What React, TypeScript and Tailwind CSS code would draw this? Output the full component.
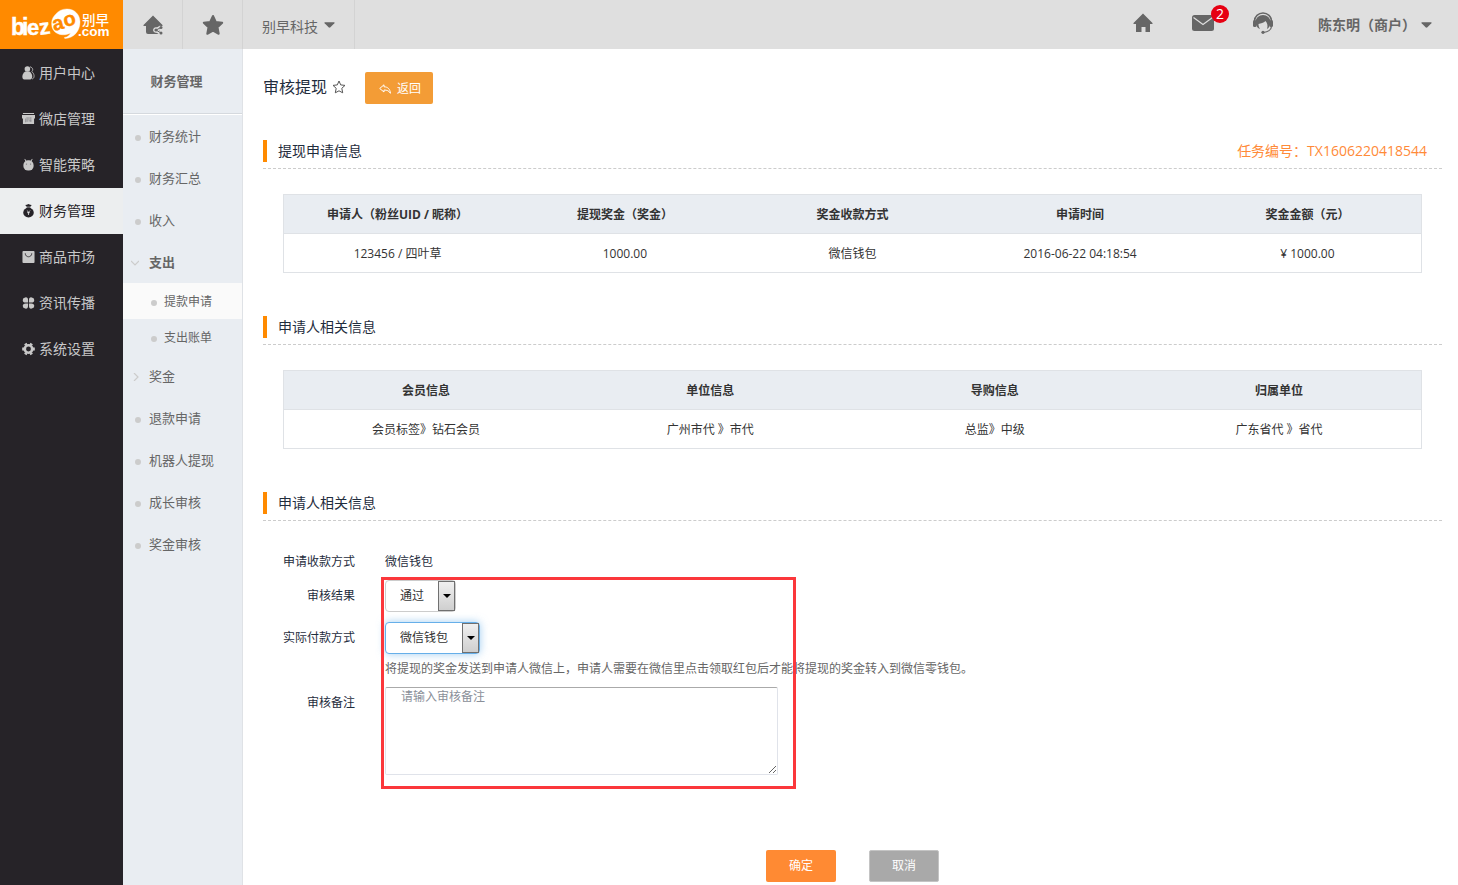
import { useState } from "react";
import type { ReactNode } from "react";
import clsx from "clsx";

function Logo() {
  return (
    <svg width="123" height="49" viewBox="0 0 123 49" role="img" aria-label="biezao 别早.com">
      <g fill="#fff" stroke="#fff" strokeWidth=".4" fontFamily="'Liberation Sans', 'Noto Sans CJK SC', sans-serif" fontWeight="700">
        <text x="11" y="35" fontSize="23">b</text>
        <text x="22" y="35" fontSize="23">i</text>
        <text x="27" y="35" fontSize="22">e</text>
        <text x="40" y="35" fontSize="22" transform="rotate(-8 40 35)">z</text>
        <path d="M52 27c-1-5 0-9 3-12 3-4 7-6 12-6 8 0 13 6 13 13 0 9-6 16-15 16.500 0 0-1-.5-.5-1 3-.5 5-2 6-4.500-5 3-16 3-18.500-6z" />
        <g fill="#ff8a00" stroke="#ff8a00">
          <text x="54" y="31" fontSize="20" transform="rotate(-14 54 31)">a</text>
          <text x="65" y="27" fontSize="20" transform="rotate(-14 65 27)">o</text>
        </g>
        <g stroke="none">
          <text x="82" y="25" fontSize="13.500" fontWeight="500">别早</text>
          <text x="78" y="36" fontSize="13.500">.com</text>
        </g>
      </g>
    </svg>
  );
}

function HomeIcon({ share = false }: { share?: boolean }) {
  return (
    <svg width="20" height="20" viewBox="0 0 20 20" fill="currentColor">
      {!share && <path d="M10 .5 19.500 10v1H17v8h-4.500v-5h-4v5H3v-8H.5v-1z" />}
      {share && (
        <>
          <path d="M10 .5 19.500 10v1H17v8H5a2 2 0 0 1-2-2v-6H.5v-1z" />
          <path d="m18 12-5 3 5 3.500" stroke="#dfdfdf" strokeWidth="3.500" fill="none" />
          <circle cx="13" cy="15" r="2.700" fill="#dfdfdf" />
          <path d="m18 12.500-5 2.500 5 3" stroke="currentColor" fill="none" />
          <circle cx="18" cy="12.500" r="1.500" />
          <circle cx="13" cy="15" r="1.600" />
          <circle cx="18" cy="18" r="1.500" />
        </>
      )}
    </svg>
  );
}

function StarIcon() {
  return (
    <svg width="22" height="22" viewBox="0 0 22 22" fill="currentColor" stroke="currentColor" strokeWidth="2" strokeLinejoin="round">
      <path d="m11 2 2.800 6 6.400.8-4.700 4.500 1.200 6.500L11 16.600l-5.700 3.200 1.200-6.500L1.800 8.800 8.200 8z" />
    </svg>
  );
}

function MailIcon() {
  return (
    <svg width="22" height="16" viewBox="0 0 22 16">
      <rect width="22" height="16" rx="2.500" fill="currentColor" />
      <path d="m1.500 2.500 9.500 7 9.500-7" stroke="#dfdfdf" strokeWidth="1.200" fill="none" />
    </svg>
  );
}

function HeadsetIcon() {
  return (
    <svg width="22" height="22" viewBox="0 0 22 22">
      <path d="M2.500 9a8.500 8 0 0 1 17 0" fill="none" stroke="currentColor" strokeWidth="1.500" />
      <path d="M11 3a7.500 7 0 0 1 7.500 7c0 3-1.500 6-3.500 7 1-3 .5-6-1.500-8-2 2-4.500 2.500-7 3 0 2 .5 3.500 1.500 5-3-1-4.500-4-4.500-7A7.500 7 0 0 1 11 3z" fill="currentColor" />
      <rect x="1" y="8" width="3.500" height="7" rx="1.500" fill="currentColor" />
      <rect x="17.500" y="8" width="3.500" height="7" rx="1.500" fill="currentColor" />
      <path d="M19.500 14.500c-.5 3.500-4 5.500-8 6" fill="none" stroke="currentColor" strokeWidth="1.200" />
      <circle cx="11" cy="20.300" r="1.600" fill="currentColor" />
    </svg>
  );
}

function Caret() {
  return (
    <svg width="11" height="6" viewBox="0 0 12 6" fill="currentColor">
      <path d="M1 0h10q1 0 .3 1L7 5.500q-1 1-2 0L.7 1Q0 0 1 0z" />
    </svg>
  );
}

const menuIcons: Record<string, ReactNode> = {
  user: (
    <>
      <path d="M8.500.8c3.500.7 3.700 4 2 5.200 3 2 3.500 7 .5 8" fill="none" stroke="currentColor" strokeWidth=".9" />
      <circle cx="5.800" cy="3.200" r="3" />
      <path d="M3.500 6h4.600c3.400 1.800 3.900 8 1 8.500H2.500C-.8 14 0 7.800 3.500 6z" />
    </>
  ),
  shop: (
    <>
      <path d="M1 1h12v1.200H1zM0 3.200h14V7h-1v6H1V7H0z" />
      <path d="M5.500 5.500v5M4 7v4M7.500 5.500v3M9.500 5.500v5M7 9.500h3" stroke="#8d8b90" fill="none" />
    </>
  ),
  robot: (
    <>
      <path d="m3 1 1.500 3M11 1 9.500 4" stroke="currentColor" />
      <rect x="1.500" y="2.500" width="11" height="11" rx="5" />
      <circle cx="4.800" cy="6.500" r=".7" fill="#77757a" />
      <circle cx="9.200" cy="6.500" r=".7" fill="#77757a" />
    </>
  ),
  money: (
    <>
      <path d="M3.500 1q1.700 0 3.500-1 1.700 1 3.500 1L9 3H5z" />
      <ellipse cx="7" cy="9.300" rx="5.700" ry="5.200" />
      <path d="M5 3.600h4v1.500H5z" />
      <path d="M5.300 7 7 8.700 8.700 7M7 8.500v3.300M5.500 9.300h3" stroke="#eceeef" strokeWidth=".8" fill="none" />
    </>
  ),
  bag: (
    <>
      <rect x=".5" y="1" width="13" height="13" rx="1" />
      <path d="M3.500 3.500c0 5 7 5 7 0" stroke="#3a373c" fill="none" />
    </>
  ),
  clover: (
    <>
      <path d="M3.500 1.500q3-.5 3 3V7H4Q.8 7 .8 4.200q0-2.500 2.700-2.700zM10.500 1.500q-3-.5-3 3V7H10q3.200 0 3.200-2.800 0-2.500-2.700-2.700zM3.500 13.500q3 .5 3-3V8H4Q.8 8 .8 10.800q0 2.500 2.700 2.700zM10.500 13.500q-3 .5-3-3V8H10q3.200 0 3.200 2.800 0 2.500-2.700 2.700z" />
    </>
  ),
  gear: (
    <>
      <circle cx="7" cy="7.500" r="4" fill="none" stroke="currentColor" strokeWidth="2.800" />
      <path d="M.2 7.500h2M11.800 7.500h2M3.600 1.600l1 1.700M10.400 1.600l-1 1.700M3.600 13.400l1-1.700M10.400 13.400l-1-1.700" stroke="currentColor" strokeWidth="3" />
    </>
  ),
};

const mainMenu = [
  { icon: "user", label: "用户中心" },
  { icon: "shop", label: "微店管理" },
  { icon: "robot", label: "智能策略" },
  { icon: "money", label: "财务管理" },
  { icon: "bag", label: "商品市场" },
  { icon: "clover", label: "资讯传播" },
  { icon: "gear", label: "系统设置" },
];

const subMenu = [
  { label: "财务统计" },
  { label: "财务汇总" },
  { label: "收入" },
  { label: "支出", open: true, children: ["提款申请", "支出账单"] },
  { label: "奖金", open: false },
  { label: "退款申请" },
  { label: "机器人提现" },
  { label: "成长审核" },
  { label: "奖金审核" },
];

function Header() {
  return (
    <header className="flex h-[49px] bg-[#dfdfdf] text-[#666]">
      <a href="#" className="w-[123px] shrink-0 bg-[#ff8a00]">
        <Logo />
      </a>
      <a href="#" aria-label="店铺" className="flex w-[60px] items-center justify-center border-r border-[#d3d3d3]">
        <HomeIcon share />
      </a>
      <a href="#" aria-label="收藏" className="flex w-[60px] items-center justify-center border-r border-[#d3d3d3]">
        <StarIcon />
      </a>
      <button type="button" className="flex items-center gap-1.5 border-r border-[#d3d3d3] pl-[19px] pr-[19px] text-sm">
        <span className="pt-1">别早科技</span>
        <Caret />
      </button>
      <div className="ml-auto flex items-center pr-[26px]">
        <div className="flex items-center pb-[3px]">
          <a href="#" aria-label="首页" className="flex w-[60px] justify-center">
            <HomeIcon />
          </a>
          <a href="#" aria-label="消息" className="relative flex w-[60px] justify-center">
            <MailIcon />
            <span className="absolute -top-2.5 right-1 flex size-[18px] items-center justify-center rounded-full bg-[#e60012] text-sm text-white">
              2
            </span>
          </a>
          <a href="#" aria-label="客服" className="flex w-[60px] justify-center">
            <HeadsetIcon />
          </a>
        </div>
        <button type="button" className="flex items-center gap-[5px] pl-[25px] text-sm font-bold">
          陈东明（商户）
          <Caret />
        </button>
      </div>
    </header>
  );
}

function MainMenu() {
  const [active, setActive] = useState("财务管理");
  return (
    <nav className="w-[123px] shrink-0 bg-[#262328] pt-px">
      {mainMenu.map((m) => (
        <a
          key={m.label}
          href="#"
          onClick={() => setActive(m.label)}
          className={clsx(
            "flex h-[46px] items-center gap-1 pl-[22px] text-sm",
            m.label === active ? "bg-[#eceeef] text-[#262328]" : "text-[#c8c8c8]"
          )}
        >
          <svg width="13" height="14" viewBox="0 0 14 15" fill="currentColor">
            {menuIcons[m.icon]}
          </svg>
          {m.label}
        </a>
      ))}
    </nav>
  );
}

function Dot() {
  return <span className="mt-0.5 size-1.5 shrink-0 rounded-full bg-[#ccc]" />;
}

function Chevron({ open }: { open: boolean }) {
  return (
    <svg width="8" height="8" viewBox="0 0 8 8" fill="none" stroke="#ccc" strokeWidth="1.200">
      <path d={open ? "M0 2l4 4 4-4" : "M3 0l4 4-4 4"} />
    </svg>
  );
}

function SubMenu() {
  return (
    <nav className="w-[120px] shrink-0 border-r border-[#dfe2e6] bg-[#e9edf2] text-[#666]">
      <h2 className="flex h-[65px] items-center justify-center border-b border-[#d5d9de] pr-3 pt-0.5 text-[13px] font-bold">
        财务管理
      </h2>
      <ul className="border-t border-white">
        {subMenu.map((s) => (
          <li key={s.label}>
            <a href="#" className={clsx("flex h-[42px] items-center pt-0.5 text-[13px]", s.children && "font-bold")}>
              <span className={clsx("flex w-[26px] shrink-0", s.open === undefined ? "pl-3" : "pl-2")}>
                {s.open === undefined ? <Dot /> : <Chevron open={s.open} />}
              </span>
              {s.label}
            </a>
            {s.children?.map((c, i) => (
              <a
                key={c}
                href="#"
                className={clsx("flex h-9 items-center gap-[7px] pl-7 pt-0.5 text-xs", i === 0 && "bg-[#fafafa]")}
              >
                <Dot />
                {c}
              </a>
            ))}
          </li>
        ))}
      </ul>
    </nav>
  );
}

function SectionTitle({ title, extra }: { title: string; extra?: string }) {
  return (
    <div className="flex h-[29px] items-start justify-between border-b border-dashed border-[#ccc] pr-[15px]">
      <h3 className="border-l-4 border-[#ff8a00] pl-[11px] text-sm leading-[22px] text-[#1f2d3d]">{title}</h3>
      {extra && <span className="text-sm leading-[22px] text-[#ff8a38]">{extra}</span>}
    </div>
  );
}

function InfoTable({ head, row }: { head: string[]; row: string[] }) {
  return (
    <div className="px-5 pb-[43px] pt-[25px]">
      <table className="w-full table-fixed border-collapse border border-[#dfe2e6] text-center text-xs text-[#333]">
        <thead className="bg-[#e9edf2]">
          <tr className="h-[39px] border-b border-[#dfe2e6]">
            {head.map((h) => (
              <th key={h} className="pt-0.5 font-bold">{h}</th>
            ))}
          </tr>
        </thead>
        <tbody>
          <tr className="h-[39px]">
            {row.map((r) => (
              <td key={r} className="pt-0.5">{r}</td>
            ))}
          </tr>
        </tbody>
      </table>
    </div>
  );
}

function SelectBox({ id, options, focused }: { id: string; options: string[]; focused?: boolean }) {
  return (
    <div
      className={clsx(
        "relative flex h-8 rounded-sm border bg-white",
        focused ? "border-[#66afe9] shadow-[0_0_8px_rgba(102,175,233,0.6)]" : "border-[#ccc]"
      )}
    >
      <select id={id} className="appearance-none bg-transparent pl-3.5 pr-[30px] text-xs text-[#333] outline-none">
        {options.map((o) => (
          <option key={o}>{o}</option>
        ))}
      </select>
      <span className="pointer-events-none absolute inset-y-0 right-0 flex w-[17px] items-center justify-center border border-[#707070] bg-linear-to-b from-[#f0f0f0] to-[#cfcfcf]">
        <svg width="8" height="4" viewBox="0 0 8 4">
          <path d="M0 0h8L4 4z" />
        </svg>
      </span>
    </div>
  );
}

const labelClass = "w-[92px] shrink-0 text-right leading-8";

export default function App() {
  const [remark, setRemark] = useState("");

  return (
    <div className="flex min-h-screen flex-col bg-white font-['Open_Sans','Noto_Sans_CJK_SC',sans-serif]">
      <Header />
      <div className="flex flex-1">
        <MainMenu />
        <SubMenu />
        <main className="min-w-0 flex-1 pb-[3px] pl-5 pr-4 pt-[23px]">
          <div className="mb-9 flex h-8 items-center text-[#1f2d3d]">
            <h1 className="pb-0.5 text-base">审核提现</h1>
            <svg className="mb-0.5 ml-[5px]" width="14" height="14" viewBox="0 0 14 14" fill="none" stroke="#555" strokeLinejoin="round">
              <path d="m7 1 1.700 3.900 4.300.5-3.200 2.900.9 4.500L7 10.800l-3.700 2 .9-4.500L1 5.400l4.300-.5z" />
            </svg>
            <button type="button" className="ml-[19px] flex h-8 items-center gap-1.5 rounded-xs bg-[#f39c36] pl-3.5 pr-3 pt-0.5 text-xs text-white">
              <svg width="12" height="10" viewBox="0 0 12 10" fill="none" stroke="currentColor" strokeLinejoin="round">
                <path d="M5 .8.700 4.500 5 8V6c3 0 5 .8 6.400 3.300C11.200 5 8.500 2.800 5 2.800z" />
              </svg>
              返回
            </button>
          </div>

          <SectionTitle title="提现申请信息" extra="任务编号：TX1606220418544" />
          <InfoTable
            head={["申请人（粉丝UID / 昵称）", "提现奖金（奖金）", "奖金收款方式", "申请时间", "奖金金额（元）"]}
            row={["123456 / 四叶草", "1000.00", "微信钱包", "2016-06-22 04:18:54", "¥ 1000.00"]}
          />

          <SectionTitle title="申请人相关信息" />
          <InfoTable
            head={["会员信息", "单位信息", "导购信息", "归属单位"]}
            row={["会员标签》钻石会员", "广州市代 》市代", "总监》中级", "广东省代 》省代"]}
          />

          <SectionTitle title="申请人相关信息" />
          <form className="text-xs text-[#1f2d3d]" onSubmit={(e) => e.preventDefault()}>
            <div className="mt-[25px] flex h-[34px] gap-[30px] leading-8">
              <span className={labelClass}>申请收款方式</span>
              <span>微信钱包</span>
            </div>
            <div className="relative">
              <div className="flex gap-[30px]">
                <label htmlFor="result" className={labelClass}>审核结果</label>
                <SelectBox id="result" options={["通过", "拒绝"]} />
              </div>
              <div className="mt-2.5 flex gap-[30px]">
                <label htmlFor="payway" className={labelClass}>实际付款方式</label>
                <SelectBox id="payway" options={["微信钱包"]} focused />
              </div>
              <p className="h-[33px] pl-[122px] leading-[30px] text-[#666]">
                将提现的奖金发送到申请人微信上，申请人需要在微信里点击领取红包后才能将提现的奖金转入到微信零钱包。
              </p>
              <div className="flex gap-[30px]">
                <label htmlFor="remark" className={labelClass}>审核备注</label>
                <textarea
                  id="remark"
                  value={remark}
                  onChange={(e) => setRemark(e.target.value)}
                  placeholder="请输入审核备注"
                  className="h-[88px] w-[393px] rounded-xs border border-[#e0e3ea] border-t-[#aaa] px-[15px] leading-[18px] placeholder:text-[#8a8f99]"
                />
              </div>
              {/* 高亮框 */}
              <div className="pointer-events-none absolute -top-[3px] left-[118px] h-[212px] w-[415px] border-3 border-[#fb373b]" />
            </div>
            <div className="mt-[75px] flex justify-center gap-[33px] text-white">
              <button type="submit" className="h-8 w-[70px] rounded-xs bg-[#ff8a33]">确定</button>
              <button type="button" className="h-8 w-[70px] rounded-xs border border-[#c4c4c4] bg-[#a9a9a9]">取消</button>
            </div>
          </form>
        </main>
      </div>
    </div>
  );
}
